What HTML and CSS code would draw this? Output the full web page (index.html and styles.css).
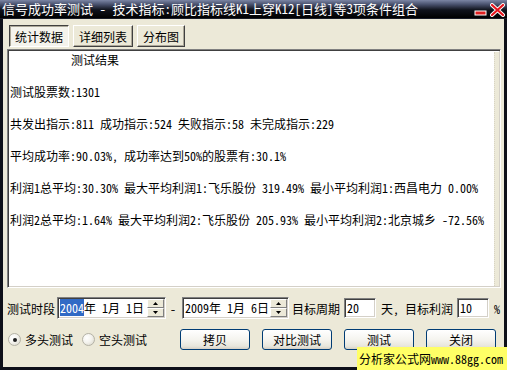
FILE: index.html
```html
<!DOCTYPE html>
<html lang="zh-CN">
<head>
  <meta charset="UTF-8" />
  <title>信号成功率测试</title>
  <link rel="stylesheet" href="styles.css">
</head>
<body>

<div class="window">
  <div class="titlebar">
    <span class="title">信号成功率测试 - 技术指标:顾比指标线K1上穿K12[日线]等3项条件组合</span>
    <div class="controls">
      <svg class="min" width="13" height="6" viewBox="0 0 13 6">
        <rect x="1" y="1" width="11" height="4" fill="#e02020" stroke="#fff" stroke-width="1"/>
      </svg>
      <svg class="close" width="15" height="14" viewBox="0 0 15 14">
        <path d="M2 2 L13 12 M13 2 L2 12" stroke="#fff" stroke-width="4" stroke-linecap="round"/>
        <path d="M2 2 L13 12 M13 2 L2 12" stroke="#e8141c" stroke-width="2.2" stroke-linecap="round"/>
      </svg>
    </div>
  </div>

  <div class="frame">
    <div class="tabs">
      <button class="tab active">统计数据</button>
      <button class="tab">详细列表</button>
      <button class="tab">分布图</button>
    </div>

    <div class="result">
      <div class="result-text">
        <p class="heading">测试结果</p>
        <p>测试股票数:1301</p>
        <p>共发出指示:811 成功指示:524 失败指示:58 未完成指示:229</p>
        <p>平均成功率:90.03%, 成功率达到50%的股票有:30.1%</p>
        <p>利润1总平均:30.30% 最大平均利润1:飞乐股份 319.49% 最小平均利润1:西昌电力 0.00%</p>
        <p>利润2总平均:1.64% 最大平均利润2:飞乐股份 205.93% 最小平均利润2:北京城乡 -72.56%</p>
      </div>
      <div class="scroll-strip"></div>
    </div>

    <div class="period">
      <span class="label">测试时段</span>
      <div class="date first">
        <span class="date-text"><span class="sel">2004</span>年 1月 1日</span>
        <div class="spin">
          <div class="spin-btn"><svg width="5" height="3" viewBox="0 0 5 3"><path d="M2.5 0 L5 3 L0 3 Z" fill="#000"/></svg></div>
          <div class="spin-btn"><svg width="5" height="3" viewBox="0 0 5 3"><path d="M0 0 L5 0 L2.5 3 Z" fill="#000"/></svg></div>
        </div>
      </div>
      <span class="dash">-</span>
      <div class="date second">
        <span class="date-text">2009年 1月 6日</span>
        <div class="spin">
          <div class="spin-btn"><svg width="5" height="3" viewBox="0 0 5 3"><path d="M2.5 0 L5 3 L0 3 Z" fill="#000"/></svg></div>
          <div class="spin-btn"><svg width="5" height="3" viewBox="0 0 5 3"><path d="M0 0 L5 0 L2.5 3 Z" fill="#000"/></svg></div>
        </div>
      </div>
      <span class="label goal">目标周期</span>
      <div class="field">20</div>
      <span class="label days">天, 目标利润</span>
      <div class="field">10</div>
      <span class="label pct">%</span>
    </div>

    <div class="actions">
      <label class="radio checked"><span class="dot"></span>多头测试</label>
      <label class="radio"><span class="dot"></span>空头测试</label>
      <button class="btn copy">拷贝</button>
      <button class="btn">对比测试</button>
      <button class="btn">测试</button>
      <button class="btn">关闭</button>
    </div>
  </div>

  <div class="watermark">分析家公式网www.88gg.com</div>
</div>

</body>
</html>
```

FILE: styles.css
```css
body {
  margin: 0;
  font-family: "Noto Sans Mono CJK SC", "Noto Sans CJK SC", sans-serif;
  font-size: 12px;
  color: #000;
}

.window {
  width: 507px;
  height: 370px;
  display: flex;
  flex-direction: column;
  position: relative;
  overflow: hidden;
}

.titlebar {
  height: 19px;
  display: flex;
  align-items: center;
  justify-content: space-between;
  background: linear-gradient(#7b85a4 0, #48506c 25%, #10131c 55%, #000 100%);
  border-bottom: 1px solid #1a1d28;
  box-sizing: border-box;
}

.title {
  padding-left: 2px;
  color: #fff;
  font-size: 13px;
  line-height: 18px;
  white-space: nowrap;
}

.controls {
  display: flex;
  align-items: flex-end;
  gap: 3px;
  padding-right: 2px;
  height: 16px;
}

.min {
  margin-bottom: 1px;
}

.frame {
  flex: 1;
  background: #ece9d8;
  border: 3px solid #0e1019;
  border-top: 0;
  padding: 6px 3px 0 4px;
}

.tabs {
  display: flex;
  gap: 4px;
  margin-left: 2px;
}

.tab {
  height: 22px;
  padding: 0 5px;
  font: inherit;
  background: #ece9d8;
  border: 1px solid;
  border-color: #fff #404040 #404040 #fff;
  box-shadow: inset -1px -1px #aca899;
}

.tab.active {
  background: #f4f3ec;
  border-color: #404040 #fff #fff #404040;
  box-shadow: inset 1px 1px #aca899;
}

.result {
  margin-top: 2px;
  height: 239px;
  display: flex;
  background: #fff;
  border: 1px solid;
  border-color: #808080 #fff #fff #808080;
  box-shadow: inset 1px 1px #404040, inset -1px -1px #d4d0c8;
  box-sizing: border-box;
  padding: 2px 1px 1px 2px;
}

.result-text {
  flex: 1;
}

.result-text p {
  margin: 0 0 16px;
  line-height: 16px;
  white-space: pre;
}

.result-text .heading {
  padding-left: 61px;
}

.scroll-strip {
  width: 4px;
  background: #ece9d8;
  border-left: 1px dotted #d8d4c4;
}

.period {
  margin-top: 9px;
  height: 22px;
  display: flex;
  align-items: center;
}

.label {
  white-space: pre;
  flex-shrink: 0;
}

.date {
  height: 22px;
  display: flex;
  align-items: center;
  justify-content: space-between;
  background: #fff;
  border: 1px solid;
  border-color: #808080 #fff #fff #808080;
  box-shadow: inset 1px 1px #404040, inset -1px -1px #d4d0c8;
  box-sizing: border-box;
  padding: 1px 1px 1px 2px;
  margin-left: 2px;
}

.date.first {
  width: 109px;
}

.date.second {
  width: 107px;
}

.date-text {
  white-space: pre;
  line-height: 14px;
}

.sel {
  background: #316ac5;
  color: #fff;
}

.spin {
  width: 17px;
  height: 18px;
  display: flex;
  flex-direction: column;
}

.spin-btn {
  flex: 1;
  display: flex;
  align-items: center;
  justify-content: center;
  background: #ece9d8;
  border: 1px solid;
  border-color: #fff #808080 #808080 #fff;
}

.dash {
  width: 14px;
  text-align: center;
}

.goal {
  margin-left: 3px;
}

.field {
  width: 32px;
  height: 20px;
  margin-left: 4px;
  flex-shrink: 0;
  background: #fff;
  border: 1px solid;
  border-color: #808080 #fff #fff #808080;
  box-shadow: inset 1px 1px #404040, inset -1px -1px #d4d0c8;
  box-sizing: border-box;
  padding: 1px 2px;
  line-height: 16px;
}

.days {
  margin-left: 5px;
}

.pct {
  margin-left: 5px;
}

.actions {
  margin-top: 10px;
  height: 21px;
  display: flex;
  align-items: center;
}

.radio {
  display: flex;
  align-items: center;
  gap: 4px;
  margin-left: 1px;
  white-space: nowrap;
  flex-shrink: 0;
}

.radio + .radio {
  margin-left: 9px;
}

.dot {
  width: 11px;
  height: 11px;
  border-radius: 50%;
  border: 1px solid #b4b2a6;
  background: radial-gradient(circle at 35% 35%, #fff 0, #f4f3ee 45%, #d6d3c6 100%);
  display: flex;
  align-items: center;
  justify-content: center;
}

.radio.checked .dot::after {
  content: "";
  width: 4px;
  height: 4px;
  border-radius: 50%;
  background: #1e1e1e;
}

.btn {
  width: 70px;
  height: 21px;
  margin-left: 12px;
  padding: 0;
  flex-shrink: 0;
  font: inherit;
  border: 1px solid #003c74;
  border-radius: 3px;
  background: linear-gradient(#fff 0, #f5f4ef 50%, #e8e6dc 85%, #d6d0c5 100%);
}

.btn.copy {
  margin-left: 33px;
}

.watermark {
  position: absolute;
  right: 0;
  bottom: 0;
  width: 150px;
  height: 23px;
  background: #ffff66;
  line-height: 23px;
  padding-left: 2px;
  box-sizing: border-box;
  white-space: nowrap;
}
```
